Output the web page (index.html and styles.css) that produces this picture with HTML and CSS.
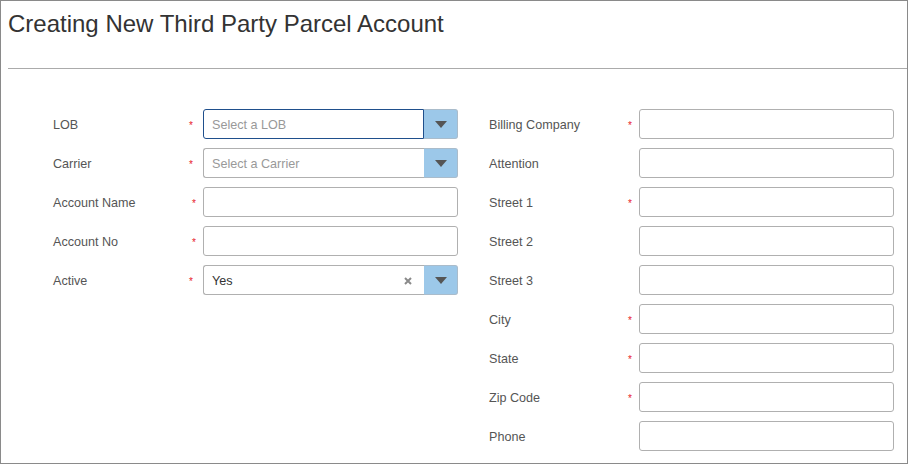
FILE: index.html
```html
<!DOCTYPE html>
<html>
<head>
<meta charset="utf-8">
<link rel="stylesheet" href="styles.css">
</head>
<body>
<div class="page">
  <div class="header">
    <h1 class="title">Creating New Third Party Parcel Account</h1>
  </div>
  <div class="form">
    <div class="col">
      <div class="row">
        <span class="label">LOB</span><span class="star star-sel">*</span>
        <div class="select focused">
          <div class="field placeholder">Select a LOB</div>
          <div class="btn"><span class="arrow"></span></div>
        </div>
      </div>
      <div class="row">
        <span class="label">Carrier</span><span class="star star-sel">*</span>
        <div class="select">
          <div class="field placeholder">Select a Carrier</div>
          <div class="btn"><span class="arrow"></span></div>
        </div>
      </div>
      <div class="row">
        <span class="label">Account Name</span><span class="star">*</span>
        <div class="input"></div>
      </div>
      <div class="row">
        <span class="label">Account No</span><span class="star">*</span>
        <div class="input"></div>
      </div>
      <div class="row">
        <span class="label">Active</span><span class="star star-sel">*</span>
        <div class="select">
          <div class="field value"><span class="val">Yes</span>
            <svg class="clear" width="8" height="8" viewBox="0 0 8 8"><path d="M1 1L7 7M7 1L1 7" stroke="#8a8a8a" stroke-width="2"/></svg>
          </div>
          <div class="btn"><span class="arrow"></span></div>
        </div>
      </div>
    </div>
    <div class="col">
      <div class="row"><span class="label">Billing Company</span><span class="star">*</span><div class="input"></div></div>
      <div class="row"><span class="label">Attention</span><span class="star none">*</span><div class="input"></div></div>
      <div class="row"><span class="label">Street 1</span><span class="star">*</span><div class="input"></div></div>
      <div class="row"><span class="label">Street 2</span><span class="star none">*</span><div class="input"></div></div>
      <div class="row"><span class="label">Street 3</span><span class="star none">*</span><div class="input"></div></div>
      <div class="row"><span class="label">City</span><span class="star">*</span><div class="input"></div></div>
      <div class="row"><span class="label">State</span><span class="star">*</span><div class="input"></div></div>
      <div class="row"><span class="label">Zip Code</span><span class="star">*</span><div class="input"></div></div>
      <div class="row"><span class="label">Phone</span><span class="star none">*</span><div class="input"></div></div>
    </div>
  </div>
</div>
</body>
</html>
```
FILE: styles.css
```css
* { box-sizing: border-box; }
html, body { margin: 0; padding: 0; background: #fff; }
body { font-family: "Liberation Sans", Arial, sans-serif; }

.page {
  width: 908px;
  height: 464px;
  border: 1px solid #8a8a8a;
  overflow: hidden;
}

.header {
  margin-left: 7px;
  height: 68px;
  padding-top: 9px;
  border-bottom: 1px solid #ababab;
}

.title {
  margin: 0;
  font-weight: normal;
  font-size: 24px;
  line-height: 28px;
  color: #333;
}

.form {
  display: flex;
  gap: 31px;
  padding: 40px 0 0 52px;
}

.col {
  width: 405px;
  display: flex;
  flex-direction: column;
  gap: 9px;
}

.row {
  display: flex;
  align-items: center;
  height: 30px;
}

.label {
  flex: 1;
  font-size: 12.6px;
  color: #555;
  padding-top: 1px;
}

.star {
  color: #e8202a;
  font-size: 10px;
  line-height: 10px;
  margin-right: 7px;
  padding-top: 3px;
}
.star-sel { margin-right: 10px; }
.none { visibility: hidden; }

.input {
  width: 255px;
  height: 30px;
  border: 1px solid #b0b0b0;
  border-radius: 3px;
}

.select {
  width: 255px;
  height: 30px;
  display: flex;
}

.field {
  flex: 1;
  display: flex;
  align-items: center;
  padding: 2px 12px 0 8px;
  border: 1px solid #b0b0b0;
  border-right: none;
  border-radius: 3px 0 0 3px;
  font-size: 12.6px;
}

.focused .field {
  border-color: #1f4f8c;
  border-right: 1px solid #1f4f8c;
}

.placeholder { color: #999; }
.value { color: #333; justify-content: space-between; }
.clear { margin-top: -1px; }

.btn {
  width: 34px;
  background: #9cc8e9;
  border: 1px solid #aabccb;
  border-left: none;
  border-radius: 0 3px 3px 0;
  display: flex;
  align-items: center;
  justify-content: center;
}

.arrow {
  width: 0;
  height: 0;
  border-left: 6px solid transparent;
  border-right: 6px solid transparent;
  border-top: 7px solid #555;
}
```
